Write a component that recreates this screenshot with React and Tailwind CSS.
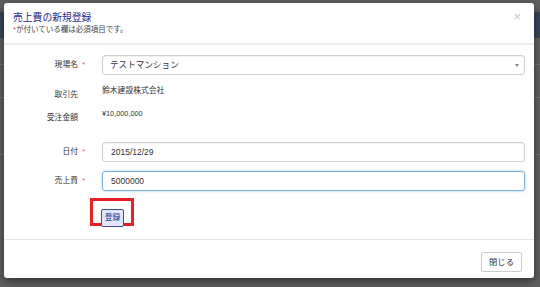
import { useState } from 'react';

// Required-field marker shown after a label
function Req({ show }) {
  return <span className="inline-block w-[7px] text-right text-[7px] text-[#d9534f]">{show ? '*' : ''}</span>;
}

function Label({ children, required }) {
  return (
    <div className="w-[81px] shrink-0 flex items-center justify-end text-[7.8px] text-[#333]">
      <span>{children}</span>
      <Req show={required} />
    </div>
  );
}

export default function App() {
  const [amount, setAmount] = useState('5000000');

  return (
    <div className="relative w-[540px] h-[287px] overflow-hidden bg-[#5f5f5f] font-['Liberation_Sans','Noto_Sans_CJK_JP',sans-serif]">
      {/* Page behind the backdrop */}
      <div className="h-[12px]" />
      <div className="h-[26px] bg-[#364858]" />
      <div className="h-[27px] border-b border-[#747474]" />
      <div className="h-[33px] border-b border-[#747474]" />
      <div className="h-[57px] border-b border-[#747474]" />

      {/* Modal */}
      <div className="absolute left-[4px] top-[3px] w-[530px] h-[275px] bg-white rounded-[3px] shadow-[0_3px_9px_rgba(0,0,0,0.5)] flex flex-col">
        {/* Header */}
        <div className="relative h-[42px] border-b-2 border-[#ececec] pl-[9px] pt-[8px]">
          <div className="text-[9.8px] leading-[13px] text-[#1f2a86]">売上費の新規登録</div>
          <div className="mt-[1px] text-[7.5px] leading-[10px] text-[#444]">
            <span className="text-[#d9534f]">*</span>が付いている欄は必須項目です。
          </div>
          <span className="absolute right-[13px] top-[6px] text-[13px] leading-[16px] text-[#c4c4c4]">×</span>
        </div>

        {/* Body */}
        <div className="flex-1 pr-[9px]">
          <div className="mt-[10px] h-[20px] flex">
            <Label required>現場名</Label>
            <div className="ml-[17px] flex-1 flex items-center justify-between rounded-[3px] border border-[#cfcfcf] bg-white pl-[7px] pr-[5px] shadow-[inset_0_1px_1px_rgba(0,0,0,0.06)]">
              <span className="text-[8.6px] text-[#333]">テストマンション</span>
              <span className="w-0 h-0 border-l-[2.5px] border-r-[2.5px] border-t-[3px] border-l-transparent border-r-transparent border-t-[#888]" />
            </div>
          </div>

          <div className="mt-[10px] h-[20px] flex items-start">
            <div className="self-center"><Label>取引先</Label></div>
            <div className="ml-[17px] text-[7.8px] leading-[12px] text-[#333]">鈴木建設株式会社</div>
          </div>

          <div className="mt-[3px] h-[20px] flex items-start">
            <div className="self-center"><Label>受注金額</Label></div>
            <div className="ml-[17px] text-[7.3px] leading-[12px] text-[#333]">¥10,000,000</div>
          </div>

          <div className="mt-[14px] h-[20px] flex">
            <Label required>日付</Label>
            <div className="ml-[17px] flex-1 flex items-center rounded-[3px] border border-[#cfcfcf] pl-[8px] shadow-[inset_0_1px_1px_rgba(0,0,0,0.06)]">
              <span className="text-[8.5px] text-[#333]">2015/12/29</span>
            </div>
          </div>

          <div className="mt-[9px] h-[20px] flex">
            <Label required>売上費</Label>
            <input
              value={amount}
              onChange={(e) => setAmount(e.target.value)}
              className="ml-[17px] flex-1 min-w-0 rounded-[3px] border border-[#79b1e0] pl-[8px] text-[8.5px] text-[#333] outline-none shadow-[0_0_3px_rgba(102,175,233,0.6)]"
            />
          </div>

          <div className="mt-[7px] ml-[86px] w-[44px] h-[28px] border-[3px] border-[#e52028] pl-[8px] pt-[2px]">
            <button className="w-[23px] h-[18px] rounded-[2px] border border-[#3f4a99] bg-[#dfe7f8] text-[7.8px] leading-none text-[#1f2a86]">
              登録
            </button>
          </div>
        </div>

        {/* Footer */}
        <div className="h-[39px] border-t border-[#e5e5e5] flex justify-end items-start pt-[12px] pr-[12px]">
          <button className="w-[41px] h-[20px] rounded-[2px] border border-[#cccccc] bg-white text-[8.3px] leading-none text-[#333]">
            閉じる
          </button>
        </div>
      </div>
    </div>
  );
}
